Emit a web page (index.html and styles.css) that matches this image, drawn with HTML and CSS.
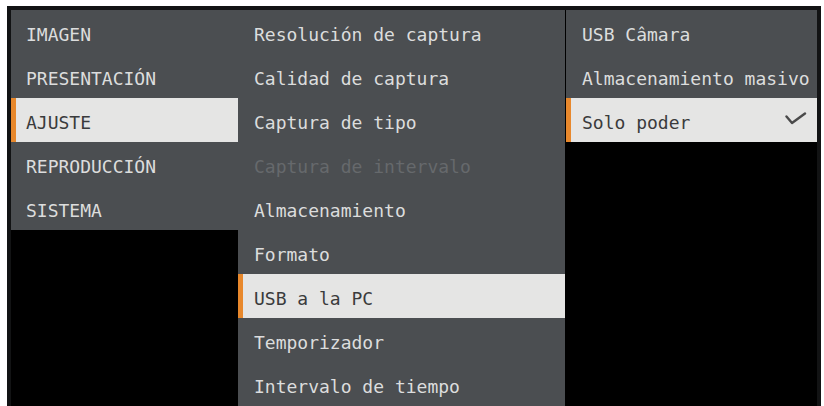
FILE: index.html
```html
<!DOCTYPE html>
<html lang="es">
<head>
<meta charset="utf-8">
<link rel="stylesheet" href="styles.css">
</head>
<body>
<div class="screen">
  <ul class="col col-1">
    <li class="row">IMAGEN</li>
    <li class="row">PRESENTACIÓN</li>
    <li class="row active">AJUSTE</li>
    <li class="row">REPRODUCCIÓN</li>
    <li class="row">SISTEMA</li>
  </ul>
  <ul class="col col-2">
    <li class="row">Resolución de captura</li>
    <li class="row">Calidad de captura</li>
    <li class="row">Captura de tipo</li>
    <li class="row disabled">Captura de intervalo</li>
    <li class="row">Almacenamiento</li>
    <li class="row">Formato</li>
    <li class="row active">USB a la PC</li>
    <li class="row">Temporizador</li>
    <li class="row">Intervalo de tiempo</li>
  </ul>
  <ul class="col col-3">
    <li class="row">USB Câmara</li>
    <li class="row">Almacenamiento masivo</li>
    <li class="row active"><span class="label">Solo poder</span>
      <svg class="check" width="22" height="14" viewBox="0 0 22 14"><polyline points="1.5,4.5 7,11 20,1.5" fill="none" stroke="#4a4a4a" stroke-width="2.4" stroke-linecap="round" stroke-linejoin="round"/></svg>
    </li>
  </ul>
</div>
</body>
</html>
```

FILE: styles.css
```css
html, body {
  margin: 0;
  padding: 0;
  background: #ffffff;
  overflow: hidden;
}

body {
  padding: 6px 0 0 7px;
}

.screen {
  box-sizing: border-box;
  width: 814px;
  height: 420px;
  background: #000000;
  border: 4px solid #121314;
  border-bottom: none;
  display: flex;
  align-items: flex-start;
  font-family: "DejaVu Sans Mono", "Liberation Mono", monospace;
  font-size: 18px;
  color: #dcdddd;
}

.col {
  list-style: none;
  margin: 0;
  padding: 0;
  background: #4b4e51;
}

.col-1 {
  width: 227px;
}

.col-2 {
  width: 327px;
}

.col-3 {
  width: 251px;
  margin-left: 1px;
}

.row {
  box-sizing: border-box;
  height: 44px;
  padding: 5px 0 0 16px;
  display: flex;
  align-items: center;
  white-space: nowrap;
  position: relative;
}

.col-1 .row {
  padding-left: 15px;
}

.row.active {
  background: #e5e5e4;
  color: #3a3b3c;
  border-left: 5px solid #e8882c;
  padding-left: 11px;
}

.col-1 .row.active {
  padding-left: 10px;
}

.row.disabled {
  color: #66696c;
}

.label {
  flex: 1;
}

.check {
  margin-right: 10px;
  margin-top: -7px;
}
```
